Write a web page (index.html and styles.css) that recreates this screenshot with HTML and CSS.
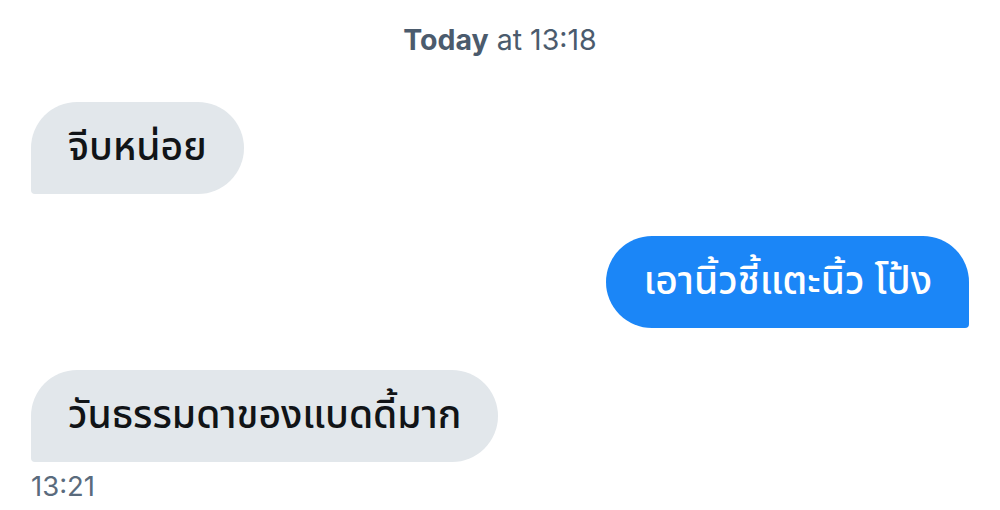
FILE: index.html
```html
<!DOCTYPE html>
<html lang="th">
<head>
<meta charset="utf-8">
<link rel="stylesheet" href="styles.css">
</head>
<body>
<div class="chat">
  <div class="stamp"><b>Today</b> at 13:18</div>
  <div class="row in"><div class="bubble in-bubble">จีบหน่อย</div></div>
  <div class="row out"><div class="bubble out-bubble">เอานิ้วชี้แตะนิ้ว โป้ง</div></div>
  <div class="row in"><div class="bubble in-bubble">วันธรรมดาของแบดดี้มาก</div></div>
  <div class="time">13:21</div>
</div>
</body>
</html>
```
FILE: styles.css
```css
html, body {
  margin: 0;
  padding: 0;
  background: #ffffff;
}
.chat {
  width: 1000px;
  height: 510px;
  box-sizing: border-box;
  padding: 20px 31px 0 31px;
  display: flex;
  flex-direction: column;
  font-family: Inter, "Noto Sans", "Noto Sans Thai", "DejaVu Sans", sans-serif;
}
.stamp {
  text-align: center;
  font-size: 28.5px;
  line-height: 40px;
  color: #4b5b6d;
  margin-bottom: 42px;
}
.stamp b {
  font-weight: 700;
}
.row {
  display: flex;
  margin-bottom: 42px;
}
.row.out {
  justify-content: flex-end;
}
.bubble {
  height: 92px;
  box-sizing: border-box;
  padding: 0 37px;
  display: flex;
  align-items: center;
  white-space: pre;
  font-size: 39px;
  font-weight: 500;
  font-family: "Noto Sans Thai", "Noto Sans", "DejaVu Sans", sans-serif;
}
.in-bubble {
  background: #e2e7eb;
  color: #111417;
  border-radius: 46px 46px 46px 4px;
}
.out-bubble {
  background: #1b86f7;
  color: #ffffff;
  border-radius: 46px 46px 4px 46px;
}
.row:last-of-type {
  margin-bottom: 0;
}
.time {
  margin-top: -36px;
  font-size: 27.5px;
  line-height: 36px;
  color: #5a6b7d;
}
```
